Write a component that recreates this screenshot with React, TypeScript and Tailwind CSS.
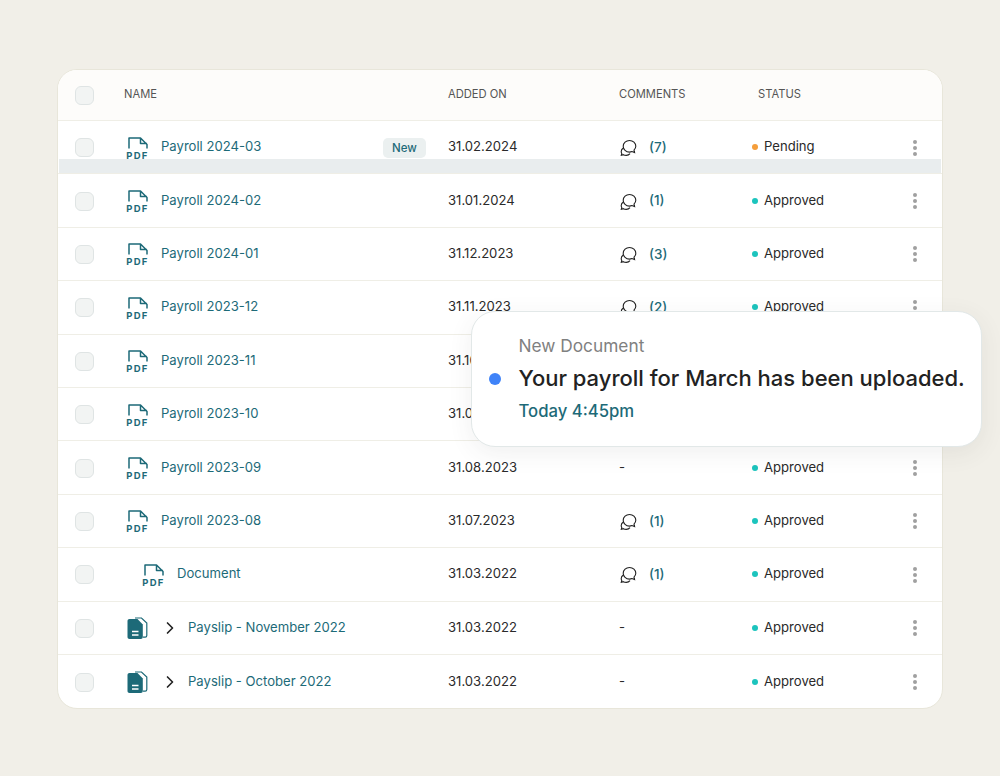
import { ChevronRight } from 'lucide-react';

interface RowData {
  name: string;
  date: string;
  comments: number | null;
  status: 'Pending' | 'Approved';
  kind: 'pdf' | 'child' | 'payslip';
  isNew?: boolean;
}

const rows: RowData[] = [
  { name: 'Payroll 2024-03', date: '31.02.2024', comments: 7, status: 'Pending', kind: 'pdf', isNew: true },
  { name: 'Payroll 2024-02', date: '31.01.2024', comments: 1, status: 'Approved', kind: 'pdf' },
  { name: 'Payroll 2024-01', date: '31.12.2023', comments: 3, status: 'Approved', kind: 'pdf' },
  { name: 'Payroll 2023-12', date: '31.11.2023', comments: 2, status: 'Approved', kind: 'pdf' },
  { name: 'Payroll 2023-11', date: '31.10.2023', comments: null, status: 'Approved', kind: 'pdf' },
  { name: 'Payroll 2023-10', date: '31.09.2023', comments: null, status: 'Approved', kind: 'pdf' },
  { name: 'Payroll 2023-09', date: '31.08.2023', comments: null, status: 'Approved', kind: 'pdf' },
  { name: 'Payroll 2023-08', date: '31.07.2023', comments: 1, status: 'Approved', kind: 'pdf' },
  { name: 'Document', date: '31.03.2022', comments: 1, status: 'Approved', kind: 'child' },
  { name: 'Payslip - November 2022', date: '31.03.2022', comments: null, status: 'Approved', kind: 'payslip' },
  { name: 'Payslip - October 2022', date: '31.03.2022', comments: null, status: 'Approved', kind: 'payslip' },
];

const columns = 'grid grid-cols-[66px_324px_171px_133px_156px_1fr] items-center';

const Checkbox = () => (
  <div className="mt-[1px] h-[19px] w-[19px] rounded-[6px] border border-[#dfe4e4] bg-[#f2f4f3]" />
);

const PdfIcon = () => (
  <div className="mt-[2px] flex w-[21px] flex-col items-center">
    <svg width="20" height="12" viewBox="0 0 20 12" fill="none" className="text-[#1d6a78]">
      <path
        d="M1 11.500V1h11.500L19 7.500v4M12.500 1v5.500H19"
        stroke="currentColor"
        strokeWidth="1.500"
        strokeLinejoin="round"
      />
    </svg>
    <span className="mt-[2px] text-[9.500px] leading-[9px] font-bold tracking-[1.300px] text-[#1d6a78]">PDF</span>
  </div>
);

const PayslipIcon = () => (
  <svg width="21" height="23" viewBox="0 0 21 23" fill="none" className="mt-[1px]">
    <path d="M8 1H14.500L19.800 6V18.500C19.800 19.500 19.200 20.100 18.200 20.100H16" stroke="#1d6a78" strokeWidth="1.200" />
    <path
      d="M2.500 2H10.500L15.800 7.500V20C15.800 21.200 15 22 13.800 22H2.500C1.300 22 .5 21.200 .5 20V4C.5 2.800 1.300 2 2.500 2Z"
      fill="#1d6a78"
    />
    <path d="M5 14.500H11.500M5 18H11.500" stroke="#fff" strokeWidth="1.500" />
  </svg>
);

const CommentIcon = () => (
  <svg width="18" height="18" viewBox="0 0 18 18" fill="none" stroke="#222" strokeWidth="1.100">
    <path d="M10.500 2.500C7 2.500 4.200 5 4.200 8.300C4.200 11.500 7 14.100 10.500 14.100C11.400 14.100 12.200 13.900 13 13.600L15.600 14.600L15 12.200C16.100 11.100 16.800 9.800 16.800 8.300C16.800 5 14 2.500 10.500 2.500Z" />
    <path d="M4.300 10C3 10.900 2.200 12.100 2.200 13.500C2.200 14.200 2.400 14.900 2.800 15.500L2.300 17.300L4.300 16.700C5.200 17.200 6.200 17.400 7.300 17.400C8.900 17.400 10.200 16.700 11 15.700" />
  </svg>
);

const RowMenu = () => (
  <div className="mt-[1px] flex flex-col items-center gap-[2px]">
    <span className="h-[4px] w-[4px] rounded-full bg-[#a0a0a0]" />
    <span className="h-[4px] w-[4px] rounded-full bg-[#a0a0a0]" />
    <span className="h-[4px] w-[4px] rounded-full bg-[#a0a0a0]" />
  </div>
);

const NameCell = ({ row }: { row: RowData }) => {
  if (row.kind === 'payslip') {
    return (
      <div className="flex items-center pl-[3px]">
        <PayslipIcon />
        <ChevronRight size={20} strokeWidth={2} className="ml-[12px] text-[#222]" />
        <span className="mb-[0.400px] ml-[8px] text-[#1d6a78]">{row.name}</span>
      </div>
    );
  }
  return (
    <div className={row.kind === 'child' ? 'flex items-center pl-[19px]' : 'flex items-center pl-[3px]'}>
      <PdfIcon />
      <span className="mb-[0.400px] ml-[13px] text-[#1d6a78]">{row.name}</span>
      {row.isNew && (
        <span className="absolute left-[325px] mt-[1px] rounded-[5px] bg-[#ebf0f0] px-[9px] py-[3px] text-[11.500px] leading-[14px] font-medium text-[#1d6a78]">
          New
        </span>
      )}
    </div>
  );
};

const App = () => {
  return (
    <div className="relative h-[776px] w-[1000px] overflow-hidden bg-[#f1efe8] pt-[68.500px] pl-[57px] font-['Inter',sans-serif] text-[13.100px] text-[#2a2a2a]">
      <div className="relative w-[886px] overflow-hidden rounded-[20px] border border-[#e8e6da] bg-white">
        <div className={`${columns} h-[51.500px] border-b border-[#efeee6] bg-[#fdfcfa] text-[11.200px] font-normal text-[#555]`}>
          <div className="pl-[17px]">
            <Checkbox />
          </div>
          <div className="mb-[1px]">NAME</div>
          <div className="mb-[1px]">ADDED ON</div>
          <div className="mb-[1px]">COMMENTS</div>
          <div className="mb-[1px] pl-[6px]">STATUS</div>
          <div />
        </div>

        {rows.map((row, i) => (
          <div
            key={row.name}
            className={`${columns} relative h-[53.400px] ${i < rows.length - 1 ? 'border-b border-[#efeee6]' : ''}`}
          >
            <div className="pl-[17px]">
              <Checkbox />
            </div>
            <NameCell row={row} />
            <div className="mb-[0.400px]">{row.date}</div>
            <div className="flex items-center">
              {row.comments === null ? (
                '-'
              ) : (
                <>
                  <CommentIcon />
                  <span className="mb-[0.400px] ml-[12px] text-[13.500px] font-medium text-[#1d6a78]">({row.comments})</span>
                </>
              )}
            </div>
            <div className="flex items-center">
              <span
                className={`h-[6px] w-[6px] rounded-full ${row.status === 'Pending' ? 'bg-[#f59e3b]' : 'bg-[#1cc4bd]'}`}
              />
              <span className="mb-[0.400px] ml-[6px]">{row.status}</span>
            </div>
            <div className="flex justify-center pr-[20px]">
              <RowMenu />
            </div>
          </div>
        ))}

        <div className="absolute top-[89px] left-[1px] h-[14px] w-[882px] bg-[#e9edee]" />
      </div>

      <div className="absolute top-[310.500px] left-[470.500px] flex h-[136px] w-[511px] items-center rounded-[24px] border border-[#e2e8e8] bg-white shadow-[0_6px_24px_rgba(60,70,70,0.08)]">
        <span className="ml-[17.500px] h-[12px] w-[12px] rounded-full bg-[#3f83f8]" />
        <div className="ml-[17.500px]">
          <div className="text-[17.300px] leading-[24px] font-normal text-[#808080]">New Document</div>
          <div className="mt-[5px] text-[22px] leading-[30px] font-medium whitespace-nowrap text-[#222]">
            Your payroll for March has been uploaded.
          </div>
          <div className="mt-[6px] text-[16.700px] leading-[24px] font-medium text-[#1d6a78]">Today 4:45pm</div>
        </div>
      </div>
    </div>
  );
};

export default App;
